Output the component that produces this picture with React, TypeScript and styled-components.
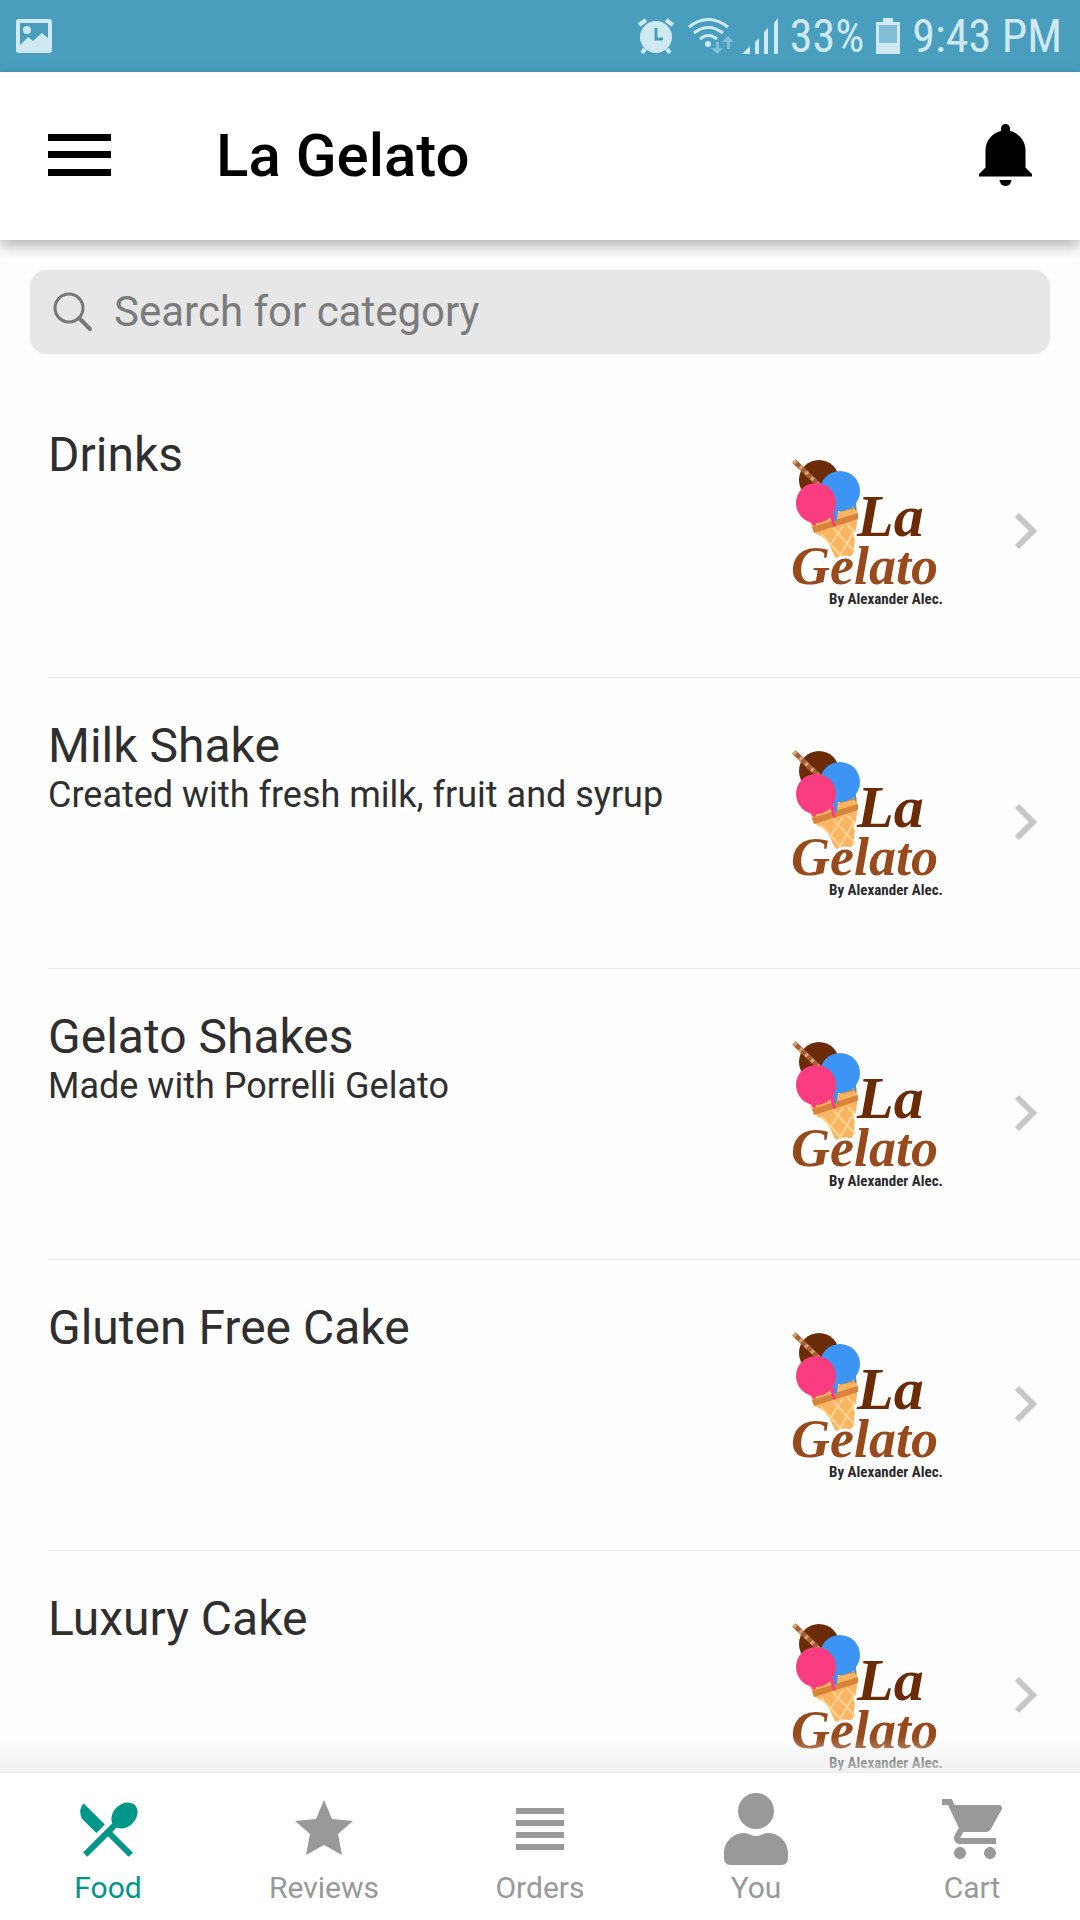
import React from "react";
import styled, { createGlobalStyle } from "styled-components";

const GlobalStyle = createGlobalStyle`
  *, *::before, *::after { box-sizing: border-box; }
  body {
    margin: 0;
    background: #fefefe;
    font-family: Roboto, "Noto Sans", sans-serif;
    color: #2f2f2f;
  }
`;

const Screen = styled.div`
  display: flex;
  flex-direction: column;
  height: 100vh;
`;

const StatusBar = styled.div`
  display: flex;
  align-items: center;
  justify-content: space-between;
  flex: none;
  height: 72px;
  padding: 0 18px 0 16px;
  background: #499ebe;
  color: #cfe9f3;
`;

const StatusGroup = styled.div`
  display: flex;
  align-items: center;
  gap: 12px;
  font-family: "Roboto Condensed", Roboto, sans-serif;
  font-size: 46px;
  line-height: 54px;
`;

const Header = styled.header`
  position: relative;
  z-index: 1;
  display: flex;
  align-items: center;
  flex: none;
  height: 168px;
  padding: 0 48px;
  background: #fff;
  box-shadow: 0 6px 14px rgba(0, 0, 0, 0.3);
`;

const IconButton = styled.button`
  display: flex;
  padding: 0;
  border: 0;
  background: none;
  color: #000;
`;

const Title = styled.h1`
  flex: 1;
  margin: 0 0 0 104px;
  font-size: 60px;
  font-weight: 500;
  line-height: 70px;
  color: #000;
`;

const Content = styled.main`
  flex: 1;
  min-height: 0;
  overflow-y: auto;
  scrollbar-width: none;
  padding-top: 30px;
`;

const SearchBox = styled.label`
  display: flex;
  align-items: center;
  gap: 20px;
  height: 84px;
  margin: 0 30px 33px;
  padding: 0 22px;
  border-radius: 16px;
  background: #e7e7e7;
  color: #777;
`;

const SearchInput = styled.input`
  flex: 1;
  min-width: 0;
  padding: 0;
  border: 0;
  outline: 0;
  background: none;
  font: 42px/50px Roboto, "Noto Sans", sans-serif;
  color: #2f2f2f;
  &::placeholder { color: #7b7b7b; opacity: 1; }
`;

const CategoryList = styled.ul`
  margin: 0;
  padding: 0 0 0 48px;
  list-style: none;
`;

const CategoryItem = styled.li`
  border-bottom: 1px solid #e8e8e8;
`;

const CategoryLink = styled.a`
  display: flex;
  align-items: center;
  height: 290px;
  padding-right: 42px;
  color: inherit;
  text-decoration: none;
`;

const CategoryText = styled.div`
  flex: 1;
  align-self: stretch;
  padding-top: 40px;
`;

const CategoryName = styled.h2`
  margin: 0;
  font-size: 48px;
  font-weight: 400;
  line-height: 56px;
`;

const CategoryNote = styled.p`
  margin: 0;
  font-size: 36px;
  line-height: 42px;
`;

const Logo = styled.svg`
  flex: none;
  width: 180px;
  height: 180px;
  margin-right: 57px;
`;

const LogoWord = styled.text`
  font-family: "Liberation Serif", serif;
  font-style: italic;
  font-weight: 700;
  stroke: #fff;
  stroke-width: 6px;
  stroke-linejoin: round;
  paint-order: stroke;
`;

const LogoByline = styled.text`
  font-family: "Roboto Condensed", "Liberation Sans Narrow", "Liberation Sans", sans-serif;
  font-size: 15px;
  font-weight: 700;
  fill: #2a2a2e;
`;

const TabBar = styled.nav`
  position: relative;
  display: flex;
  flex: none;
  height: 147px;
  padding-top: 20px;
  background: #fff;
  &::before {
    content: "";
    position: absolute;
    left: 0;
    right: 0;
    bottom: 100%;
    height: 36px;
    background: linear-gradient(rgba(250, 250, 250, 0), rgba(236, 236, 236, 0.8));
    pointer-events: none;
  }
`;

const Tab = styled.a<{ $active?: boolean }>`
  display: flex;
  flex: 1;
  flex-direction: column;
  align-items: center;
  gap: 5px;
  font-size: 30px;
  line-height: 36px;
  text-decoration: none;
  color: ${(p) => (p.$active ? "#009688" : "#999")};
`;

const PictureIcon = () => (
  <svg width="36" height="34" viewBox="0 0 36 34" aria-hidden="true">
    <rect x="2" y="2" width="32" height="30" rx="1" fill="none" stroke="currentColor" strokeWidth="4" />
    <circle cx="11" cy="11" r="4" fill="currentColor" />
    <path d="M3 27 12 18l5 4 9-8 7 6v12H3z" fill="currentColor" />
  </svg>
);

const AlarmIcon = () => (
  <svg width="36" height="36" viewBox="0 0 36 36" aria-hidden="true" fill="none" stroke="currentColor">
    <circle cx="18" cy="19" r="16" fill="currentColor" stroke="none" />
    <path d="M1 7 8 2M35 7 28 2M7 31 4 35M29 31l3 4" strokeWidth="4" />
    <path d="M18 10v11h7" stroke="#499ebe" strokeWidth="3" />
  </svg>
);

const ConnectivityIcon = () => (
  <svg width="92" height="36" viewBox="0 0 92 36" aria-hidden="true" fill="none" stroke="currentColor">
    <path d="M3 9q19-15 39 0M8 15q14-11 29 0M14 21q8-7 17 0" strokeWidth="3" />
    <circle cx="22" cy="26" r="3" fill="currentColor" stroke="none" />
    <g fill="#82bfd6" stroke="none">
      <path d="M30 24h3v6h4l-6 6-6-6h5z" />
      <path d="M41 31h3v-7h4l-6-6-6 6h5z" />
    </g>
    <path d="M56 36h8v-8zM69 36h4V20l-4 4zM78 36h4V10l-4 4zM88 36h4V0l-4 5z" fill="currentColor" stroke="none" />
  </svg>
);

const BatteryIcon = () => (
  <svg width="24" height="36" viewBox="0 0 24 36" aria-hidden="true">
    <path d="M7 0h10v4h7v32H0V4h7z" fill="currentColor" />
    <path d="M3 7h18v18H3z" fill="#82bed5" />
  </svg>
);

const MenuIcon = () => (
  <svg width="64" height="44" viewBox="0 0 64 44" aria-hidden="true">
    <path d="M0 0h63v7H0zM0 17h63v7H0zM0 35h63v7H0z" fill="currentColor" />
  </svg>
);

const BellIcon = () => (
  <svg width="53" height="64" viewBox="0 0 53 64" aria-hidden="true" fill="currentColor">
    <path d="M26.500 0a4.500 4.500 0 0 0-4.500 4.500V7C13 9 6.500 17 6.500 26v17.500L0 50v2.500h53V50l-6.500-6.500V26C46.500 17 40 9 31 7V4.500A4.500 4.500 0 0 0 26.500 0z" />
    <path d="M20.500 56h12a6 6 0 0 1-12 0z" />
  </svg>
);

const SearchIcon = () => (
  <svg width="42" height="42" viewBox="0 0 42 42" aria-hidden="true" fill="none" stroke="currentColor" strokeLinecap="round">
    <circle cx="17" cy="17" r="14" strokeWidth="3" />
    <path d="M28 28 38 38" strokeWidth="4" />
  </svg>
);

const ChevronIcon = () => (
  <svg width="24" height="40" viewBox="0 0 24 40" aria-hidden="true">
    <path d="M3 3 19 19 3 35" fill="none" stroke="#c7c7ca" strokeWidth="6" />
  </svg>
);

const tabIcons: Record<string, React.ReactNode> = {
  Food: (
    <path
      transform="scale(3)"
      d="M8.100 13.340l2.830-2.830L3.910 3.500a4.008 4.008 0 0 0 0 5.660l4.190 4.180zm6.780-1.810c1.530.71 3.680.21 5.270-1.380 1.910-1.910 2.280-4.650.81-6.120-1.460-1.460-4.200-1.100-6.120.81-1.590 1.590-2.090 3.740-1.380 5.270L3.700 19.870l1.410 1.410L12 14.410l6.880 6.880 1.410-1.410L13.410 13l1.470-1.470z"
    />
  ),
  Reviews: <path d="M36 7 28 26 7 28 22 41 18 62 36 52 54 62 50 41 65 28 44 26z" />,
  Orders: <path d="M12 15h48v6H12zM12 27h48v6H12zM12 39h48v6H12zM12 51h48v6H12z" />,
  You: (
    <>
      <circle cx="36" cy="18" r="18" />
      <path d="M4 66v-6C4 49 13 40 24 40c5 0 6 3 12 3s7-3 12-3c11 0 20 9 20 20v6a6 6 0 0 1-6 6H10a6 6 0 0 1-6-6z" />
    </>
  ),
  Cart: (
    <path
      transform="translate(3) scale(3)"
      d="M7 18c-1.100 0-1.990.9-1.990 2S5.900 22 7 22s2-.9 2-2-.9-2-2-2zM1 2v2h2l3.600 7.590-1.350 2.450c-.16.280-.25.610-.25.960 0 1.100.9 2 2 2h12v-2H7.420c-.14 0-.25-.11-.25-.25l.03-.12.9-1.630h7.450c.75 0 1.410-.41 1.750-1.030l3.580-6.490A1.003 1.003 0 0 0 20 4H5.210l-.94-2H1zm16 16c-1.100 0-1.990.9-1.990 2s.89 2 1.990 2 2-.9 2-2-.9-2-2-2z"
    />
  ),
};

const GelatoLogo = () => (
  <Logo viewBox="0 0 180 180" role="img" aria-label="La Gelato by Alexander Alec">
    <circle cx="42" cy="38" r="20" fill="#6b2b06" />
    <path d="M17 19 42 43" stroke="#a45f35" strokeWidth="5" />
    <path d="M17 19 42 43" stroke="#dda273" strokeWidth="4" strokeDasharray="3 5" />
    <path d="M32 78 80 64 80 80 76 112Q68 120 58 115L50 98 37 90z" fill="#f9b562" />
    <path d="M35 85 81 71V77L37 91z" fill="#d8843b" />
    <path d="M44 92 66 116M56 86l22 24M70 82l8 9M66 84 54 102M78 87 62 115" stroke="#ffd493" strokeWidth="2" />
    <path d="M40 76 53 73M63 69l14-3" stroke="#dd8c3d" strokeWidth="2" />
    <circle cx="63" cy="49" r="20" fill="#3c94f4" />
    <path d="M56 60h23v9l-3-5-2 3-3-4-7 2-3 4-1 9q-3 3-5-1z" fill="#3c94f4" />
    <circle cx="39" cy="61" r="20" fill="#fa3c80" />
    <path d="M28 73h30l-1 6 2 5q-3 2-4-3l-2-7-12 3-3 7q-3 0-4-5z" fill="#fa3c80" />
    <LogoWord x="80" y="94" fontSize="60" fill="#6b2b06">La</LogoWord>
    <LogoWord x="14" y="142" fontSize="54" fill="#984a1c">Gelato</LogoWord>
    <LogoByline x="52" y="162">By Alexander Alec.</LogoByline>
  </Logo>
);

const categories = [
  { name: "Drinks" },
  { name: "Milk Shake", note: "Created with fresh milk, fruit and syrup" },
  { name: "Gelato Shakes", note: "Made with Porrelli Gelato" },
  { name: "Gluten Free Cake" },
  { name: "Luxury Cake" },
];

const tabs = ["Food", "Reviews", "Orders", "You", "Cart"];

export default function App() {
  return (
    <Screen>
      <GlobalStyle />
      <StatusBar>
        <PictureIcon />
        <StatusGroup>
          <AlarmIcon />
          <ConnectivityIcon />
          <span>33%</span>
          <BatteryIcon />
          <span>9:43 PM</span>
        </StatusGroup>
      </StatusBar>
      <Header>
        <IconButton type="button" aria-label="Menu"><MenuIcon /></IconButton>
        <Title>La Gelato</Title>
        <IconButton type="button" aria-label="Notifications"><BellIcon /></IconButton>
      </Header>
      <Content>
        <SearchBox>
          <SearchIcon />
          <SearchInput type="text" aria-label="Search for category" placeholder="Search for category" />
        </SearchBox>
        <CategoryList>
          {categories.map((c) => (
            <CategoryItem key={c.name}>
              <CategoryLink href="#">
                <CategoryText>
                  <CategoryName>{c.name}</CategoryName>
                  {c.note && <CategoryNote>{c.note}</CategoryNote>}
                </CategoryText>
                <GelatoLogo />
                <ChevronIcon />
              </CategoryLink>
            </CategoryItem>
          ))}
        </CategoryList>
      </Content>
      <TabBar>
        {tabs.map((name) => (
          <Tab key={name} href="#" $active={name === "Food"}>
            <svg width="72" height="72" viewBox="0 0 72 72" fill="currentColor" aria-hidden="true">
              {tabIcons[name]}
            </svg>
            {name}
          </Tab>
        ))}
      </TabBar>
    </Screen>
  );
}
